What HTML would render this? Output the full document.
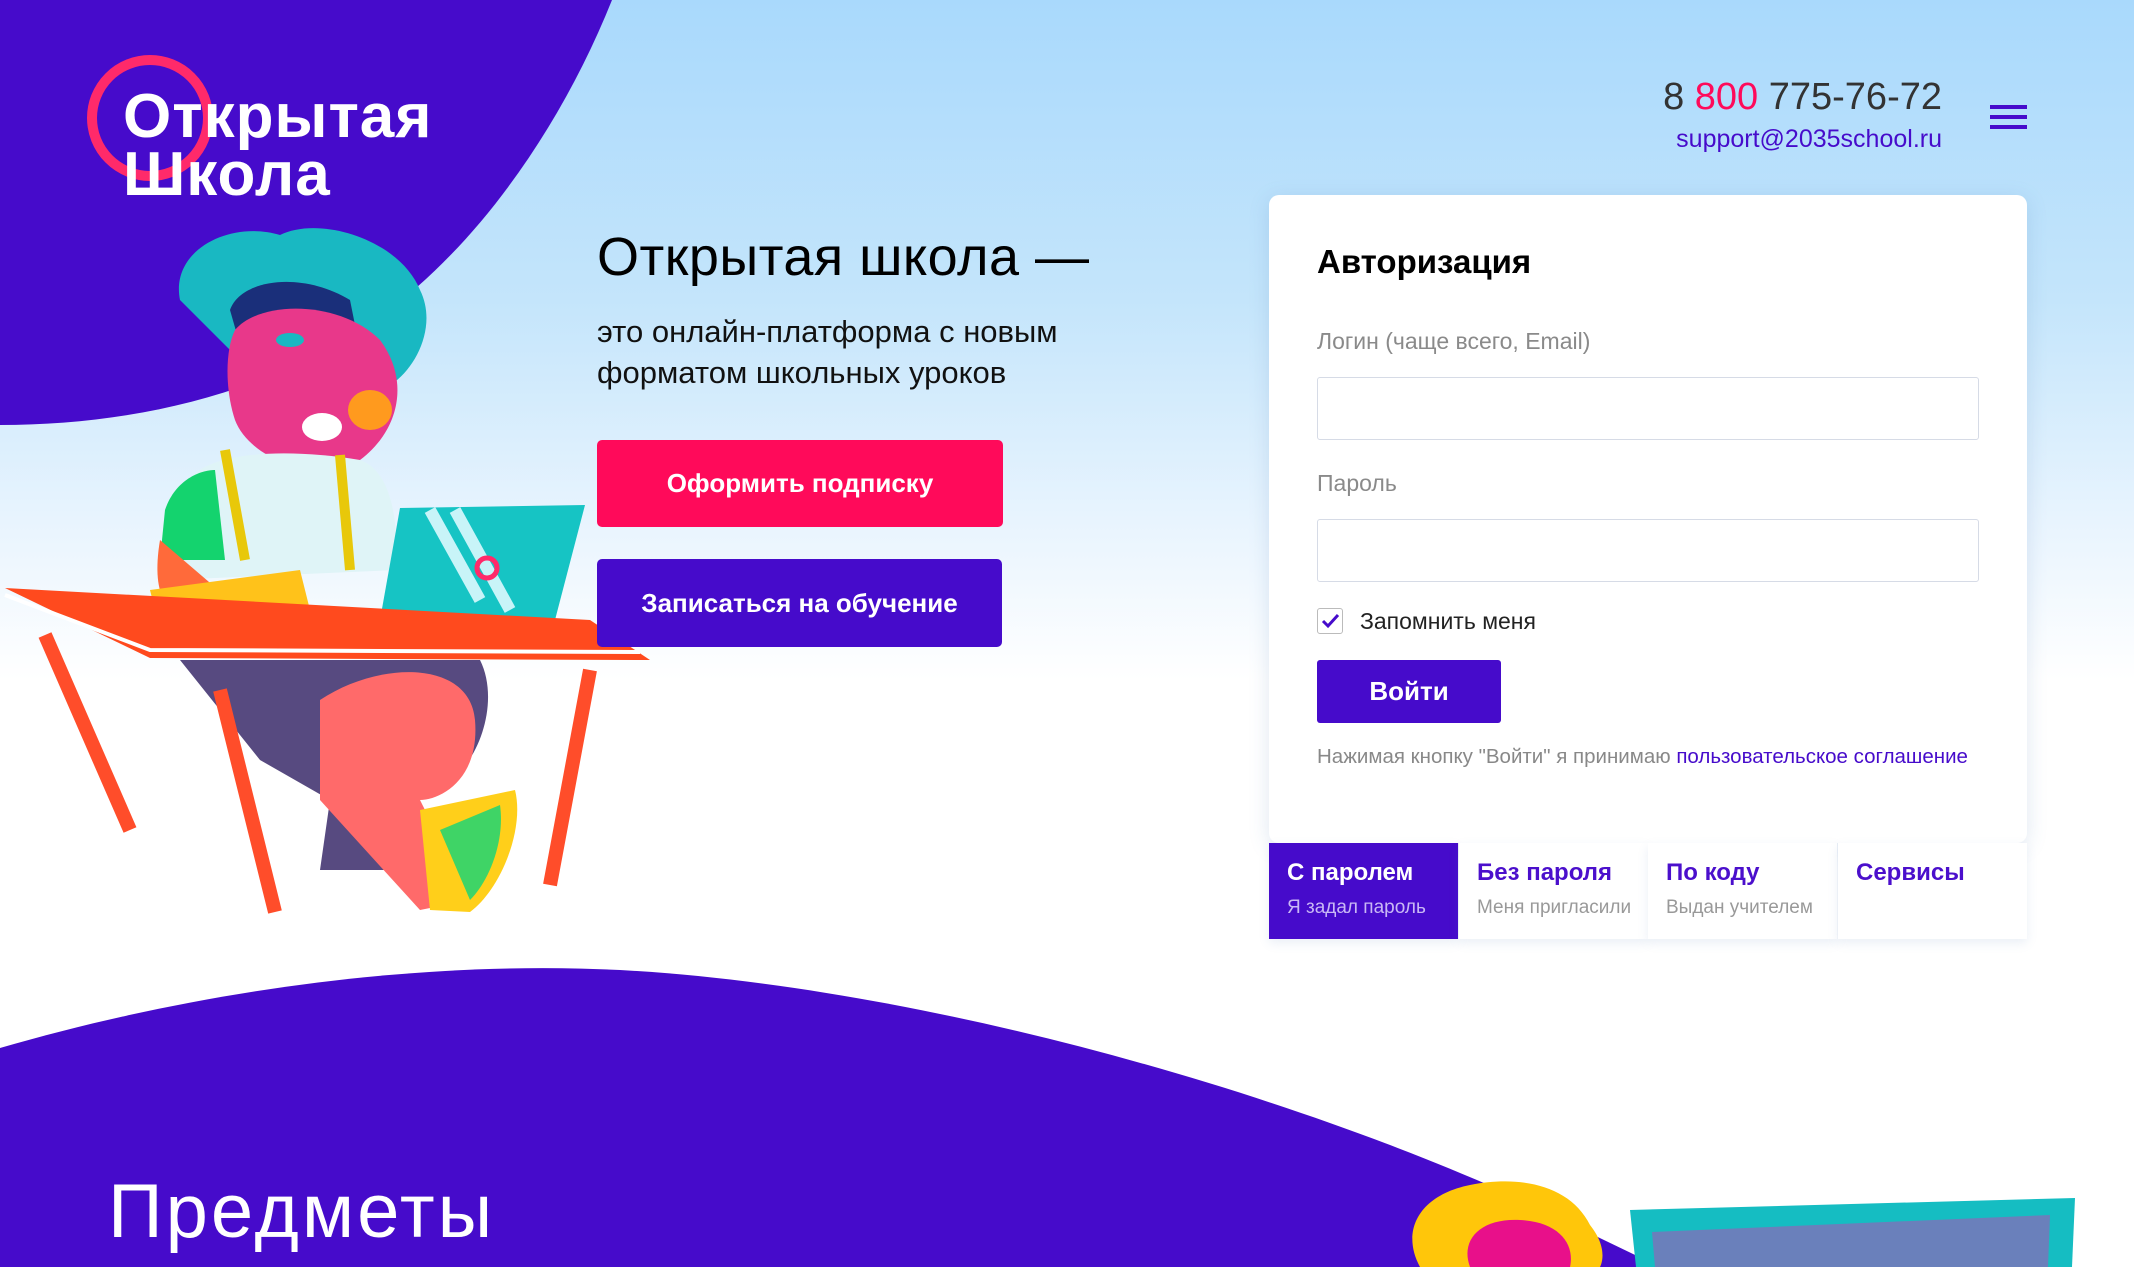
<!DOCTYPE html>
<html><head><meta charset="utf-8"><style>
*{margin:0;padding:0;box-sizing:border-box}
body{width:2134px;height:1267px;overflow:hidden;position:relative;font-family:"Liberation Sans","DejaVu Sans",sans-serif;background:linear-gradient(180deg,#a9d9fc 0px,#c4e5fb 300px,#e8f4fe 520px,#ffffff 680px,#fff 100%)}
.abs{position:absolute}
.btn{position:absolute;color:#fff;font-weight:bold;font-size:26px;display:flex;align-items:center;justify-content:center;border-radius:5px}
.card{position:absolute;left:1269px;top:195px;width:758px;height:648px;background:#fff;border-radius:10px;box-shadow:0 4px 20px rgba(80,120,180,.18)}
.lbl{position:absolute;left:48px;font-size:23px;color:#8a8a8a}
.inp{position:absolute;left:48px;width:662px;height:63px;border:1px solid #d6dbe6;border-radius:3px}
.tab{position:absolute;top:843px;height:96px;width:189px;background:#fff;box-shadow:0 4px 10px rgba(80,120,180,.12)}
.tab b{position:absolute;left:18px;top:16px;font-size:24px;color:#4b0fcc;font-weight:bold}
.tab span{position:absolute;left:18px;top:54px;font-size:19px;color:#999}
</style></head><body>
<svg class="abs" style="left:0;top:0" width="2134" height="1267" viewBox="0 0 2134 1267">
<path d="M0 0H612C560 130 470 260 360 330C250 400 120 425 0 425Z" fill="#460bcb"/>
<path d="M0 1048C200 990 420 960 620 970C900 985 1250 1080 1500 1190L1660 1267H0Z" fill="#460bcb"/>
<circle cx="150" cy="118" r="58" fill="none" stroke="#ff2a6a" stroke-width="10"/>
<path d="M180 300C170 250 230 220 280 235C320 215 400 240 420 290C440 330 410 380 380 390L260 380Z" fill="#19b8c2"/>
<path d="M230 310C240 280 300 270 350 300L360 350L250 380Z" fill="#1a2f7a"/>
<path d="M235 330C260 300 340 300 380 340C410 380 400 430 360 460C320 485 250 460 235 420C225 390 225 350 235 330Z" fill="#e8388a"/>
<ellipse cx="322" cy="427" rx="20" ry="14" fill="#fff"/>
<ellipse cx="370" cy="410" rx="22" ry="20" fill="#ff9a1e"/>
<ellipse cx="290" cy="340" rx="14" ry="7" fill="#19b8c2"/>
<path d="M200 470C230 450 300 450 360 460C390 470 400 520 395 570L170 580C150 540 170 490 200 470Z" fill="#dff4f7"/>
<path d="M165 510C175 480 200 470 215 470L225 560L160 560Z" fill="#14d36e"/>
<path d="M160 540C150 600 170 620 200 620L230 600Z" fill="#ff6a3a"/>
<path d="M225 450L245 560M340 455L350 570" stroke="#e8c80a" stroke-width="10"/>
<path d="M150 590L300 570L310 610L160 630Z" fill="#ffc21a"/>
<path d="M400 508L585 505L555 620L380 620Z" fill="#16c4c4"/>
<path d="M430 510L480 600M455 510L510 610" stroke="#c8f4f8" stroke-width="12"/>
<circle cx="487" cy="568" r="10" fill="none" stroke="#ff2a6a" stroke-width="5"/>
<path d="M5 588L590 620L650 660L640 660L150 658Z" fill="#ff4a1e"/>
<path d="M5 595L150 650L640 652" fill="none" stroke="#fff" stroke-width="4"/>
<path d="M180 660L480 660C500 700 480 760 450 780L380 800L420 870L320 870L330 800L260 760Z" fill="#3a2a6a" opacity=".85"/>
<path d="M320 700C380 660 470 660 475 720C480 780 440 800 420 800L470 900L420 910L320 800Z" fill="#ff6a6a"/>
<path d="M420 810L515 790C525 830 500 890 470 912L430 910Z" fill="#ffcf1a"/>
<path d="M440 830L500 805C505 840 490 880 470 900Z" fill="#3fd466"/>
<path d="M45 635L130 830M220 690L275 912M590 670L550 885" stroke="#ff4d2a" stroke-width="14"/>
<path d="M1420 1267C1400 1230 1420 1195 1470 1185C1520 1175 1570 1185 1590 1225C1610 1250 1600 1267 1600 1267Z" fill="#ffc60a"/>
<path d="M1470 1267C1460 1240 1480 1218 1520 1220C1560 1222 1575 1245 1570 1267Z" fill="#e8108a"/>
<path d="M1630 1210L2075 1198L2072 1267H1636Z" fill="#15bdc2"/>
<path d="M1652 1232L2050 1215L2048 1267H1655Z" fill="#6a80bb"/>
</svg>
<div class="abs" style="left:123px;top:88px;font-size:62px;font-weight:bold;color:#fff;line-height:58px;letter-spacing:1px">Открытая<br>Школа</div>

<div class="abs" style="left:597px;top:226px;font-size:54px;color:#000;letter-spacing:.5px">Открытая школа —</div>
<div class="abs" style="left:597px;top:311px;font-size:31px;color:#111;line-height:41px">это онлайн-платформа с новым<br>форматом школьных уроков</div>
<div class="btn" style="left:597px;top:440px;width:406px;height:87px;background:#ff0a5a">Оформить подписку</div>
<div class="btn" style="left:597px;top:559px;width:405px;height:88px;background:#460bcb">Записаться на обучение</div>

<div class="abs" style="right:192px;top:76px;font-size:38px;color:#333;text-align:right">8 <span style="color:#ff0a5a">800</span> 775-76-72</div>
<div class="abs" style="right:192px;top:125px;font-size:25px;color:#460bcb">support@2035school.ru</div>
<div class="abs" style="left:1990px;top:105px;width:37px;height:4px;background:#460bcb;box-shadow:0 10px 0 #460bcb,0 20px 0 #460bcb"></div>

<div class="card">
<div class="abs" style="left:48px;top:48px;font-size:33px;color:#000;font-weight:bold">Авторизация</div>
<div class="lbl" style="top:133px">Логин (чаще всего, Email)</div>
<div class="inp" style="top:182px"></div>
<div class="lbl" style="top:275px">Пароль</div>
<div class="inp" style="top:324px"></div>
<div class="abs" style="left:48px;top:413px;width:26px;height:26px;border:1px solid #bbb;border-radius:3px"><svg width="24" height="24"><path d="M5 12L10 17L20 6" fill="none" stroke="#460bcb" stroke-width="3"/></svg></div>
<div class="abs" style="left:91px;top:413px;font-size:23px;color:#222">Запомнить меня</div>
<div class="btn" style="left:48px;top:465px;width:184px;height:63px;background:#460bcb;border-radius:3px">Войти</div>
<div class="abs" style="left:48px;top:550px;font-size:20.5px;color:#888">Нажимая кнопку "Войти" я принимаю <span style="color:#460bcb">пользовательское соглашение</span></div>
</div>
<div class="tab" style="left:1269px;background:#460bcb"><b style="color:#fff">С паролем</b><span style="color:#c9b8f5">Я задал пароль</span></div>
<div class="tab" style="left:1459px"><b>Без пароля</b><span>Меня пригласили</span></div>
<div class="tab" style="left:1648px"><b>По коду</b><span>Выдан учителем</span></div>
<div class="tab" style="left:1838px"><b>Сервисы</b></div>

<div class="abs" style="left:108px;top:1168px;font-size:76px;color:#fff;letter-spacing:3px">Предметы</div>
</body></html>
